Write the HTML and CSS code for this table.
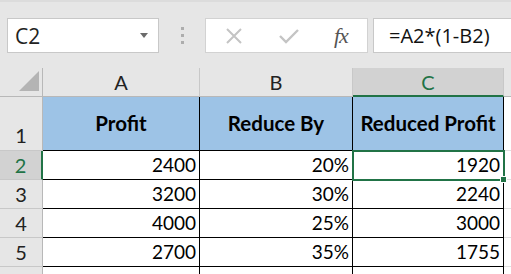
FILE: index.html
```html
<!DOCTYPE html>
<html>
<head>
<meta charset="utf-8">
<link rel="stylesheet" href="styles.css">
</head>
<body>
<div class="toolbar">
  <div class="namebox">
    <span class="name">C2</span>
    <svg class="arrow" width="8" height="5" viewBox="0 0 8 5"><path d="M0 0H8L4 5Z" fill="#6b6b6b"/></svg>
  </div>
  <div class="dots"><i></i><i></i><i></i></div>
  <div class="buttons">
    <svg class="icon" width="18" height="18" viewBox="0 0 18 18"><path d="M2 2L16 16M16 2L2 16" stroke="#c4c4c4" stroke-width="2" fill="none"/></svg>
    <svg class="icon" width="20" height="18" viewBox="0 0 20 18"><path d="M1 9L7 15L19 3" stroke="#c4c4c4" stroke-width="2.4" fill="none"/></svg>
    <span class="fx">fx</span>
  </div>
  <div class="formula">=A2*(1-B2)</div>
</div>
<div class="sheet">
  <div class="corner"><svg width="22" height="22" viewBox="0 0 22 22"><path d="M21 1V21H1Z" fill="#b4b4b4"/></svg></div>
  <div class="colhead">A</div>
  <div class="colhead">B</div>
  <div class="colhead sel">C</div>
  <div class="colhead rest"></div>

  <div class="rowhead tall">1</div>
  <div class="cell head">Profit</div>
  <div class="cell head">Reduce By</div>
  <div class="cell head">Reduced Profit</div>
  <div class="cell rest"></div>

  <div class="rowhead sel">2</div>
  <div class="cell">2400</div>
  <div class="cell">20%</div>
  <div class="cell active">1920<span class="handle"></span></div>
  <div class="cell rest"></div>

  <div class="rowhead">3</div>
  <div class="cell">3200</div>
  <div class="cell">30%</div>
  <div class="cell">2240</div>
  <div class="cell rest"></div>

  <div class="rowhead">4</div>
  <div class="cell">4000</div>
  <div class="cell">25%</div>
  <div class="cell">3000</div>
  <div class="cell rest"></div>

  <div class="rowhead">5</div>
  <div class="cell">2700</div>
  <div class="cell">35%</div>
  <div class="cell">1755</div>
  <div class="cell rest"></div>

  <div class="rowhead"></div>
  <div class="cell blank"></div>
  <div class="cell blank"></div>
  <div class="cell blank"></div>
  <div class="cell rest"></div>
</div>
</body>
</html>
```
FILE: styles.css
```css
* { box-sizing: border-box; }
html, body { margin: 0; padding: 0; }
body {
  width: 511px;
  height: 274px;
  overflow: hidden;
  background: #ffffff;
  font-family: Lato, "Liberation Sans", sans-serif;
  color: #000;
}
.toolbar {
  height: 68px;
  background: #e6e6e6;
  border-top: 2px solid #dcdcdc;
  display: flex;
  align-items: flex-start;
  padding: 16px 0 0 7px;
  font-family: "Open Sans", "Noto Sans", sans-serif;
}
.namebox {
  width: 152px;
  height: 35px;
  background: #fff;
  border: 1px solid #c8c8c8;
  display: flex;
  align-items: center;
  justify-content: space-between;
  padding: 0 10px 0 7px;
  font-size: 21px;
  color: #222;
}
.dots {
  width: 46px;
  height: 35px;
  display: flex;
  flex-direction: column;
  align-items: center;
  justify-content: center;
  gap: 4px;
}
.dots i {
  display: block;
  width: 3px;
  height: 3px;
  background: #adadad;
}
.buttons {
  width: 163px;
  height: 35px;
  background: #fff;
  border: 1px solid #d2d2d2;
  display: flex;
  align-items: center;
  padding-left: 19px;
}
.buttons .icon:nth-child(2) { margin-left: 36px; }
.fx {
  margin-left: 35px;
  font-family: "Liberation Serif", serif;
  font-style: italic;
  font-size: 22px;
  color: #555;
  letter-spacing: -1px;
}
.formula {
  margin-left: 5px;
  flex: 1;
  height: 35px;
  background: #fff;
  border: 1px solid #c8c8c8;
  border-right: none;
  padding-left: 15px;
  font-size: 20px;
  line-height: 33px;
  color: #111;
}
.sheet {
  display: grid;
  grid-template-columns: 43px 157px 153px 151px 7px;
  grid-template-rows: 29px 54px 29px 29px 29px 29px 8px;
  font-size: 19px;
}
.corner {
  background: #e6e6e6;
  border-right: 1px solid #b8b8b8;
  border-bottom: 1px solid #b8b8b8;
  display: flex;
  align-items: flex-end;
  justify-content: flex-end;
  padding: 0 2px 4px 0;
}
.colhead {
  background: #e6e6e6;
  border-right: 1px solid #c8c8c8;
  border-bottom: 1px solid #b8b8b8;
  text-align: center;
  font-size: 20px;
  line-height: 28px;
  color: #222;
}
.colhead.sel {
  background: #d2d2d2;
  color: #217346;
  border-bottom: 2px solid #217346;
}
.colhead.rest { border-right: none; }
.rowhead {
  background: #e6e6e6;
  border-right: 1px solid #b8b8b8;
  border-bottom: 1px solid #c8c8c8;
  text-align: center;
  font-size: 20px;
  line-height: 28px;
  color: #222;
}
.rowhead.tall {
  display: flex;
  align-items: flex-end;
  justify-content: center;
  padding-bottom: 1px;
}
.rowhead.sel {
  background: #d2d2d2;
  color: #217346;
  border-right: 2px solid #217346;
}
.cell {
  position: relative;
  border-right: 1px solid #000;
  border-bottom: 1px solid #000;
  text-align: right;
  padding-right: 3px;
  line-height: 28px;
  white-space: nowrap;
}
.cell.head {
  background: #9dc3e6;
  font-weight: bold;
  font-size: 20.5px;
  text-align: center;
  line-height: 53px;
  padding-right: 0;
}
.cell.blank { border-bottom: none; }
.cell.rest { border: none; border-bottom: 1px solid #e0e0e0; }
.cell.active {
  z-index: 2;
  outline: 2px solid #217346;
  outline-offset: -1px;
}
.handle {
  position: absolute;
  right: -4px;
  bottom: -4px;
  width: 7px;
  height: 7px;
  background: #217346;
  border: 1px solid #fff;
}
```
